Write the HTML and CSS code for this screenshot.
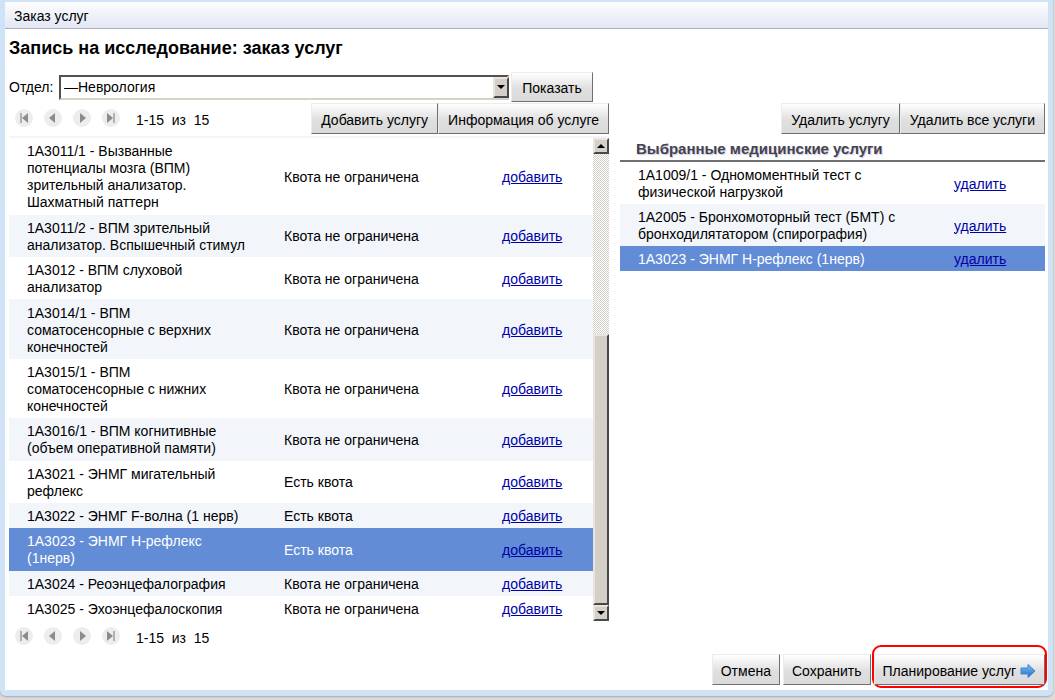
FILE: index.html
```
<!DOCTYPE html>
<html lang="ru">
<head>
<meta charset="utf-8">
<title>Заказ услуг</title>
<link rel="stylesheet" href="styles.css">
</head>
<body>
<svg class="defs" width="0" height="0" aria-hidden="true">
  <symbol id="prev" viewBox="0 0 18 18"><circle cx="9" cy="9" r="9" fill="#ededed"/><path d="M11 4v10L5 9z" fill="#8c8c8c"/></symbol>
  <symbol id="next" viewBox="0 0 18 18"><circle cx="9" cy="9" r="9" fill="#ededed"/><path d="M7 4v10l6-5z" fill="#8c8c8c"/></symbol>
  <symbol id="first" viewBox="0 0 18 18"><circle cx="9" cy="9" r="9" fill="#ededed"/><path d="M13 4v10L7 9z" fill="#8c8c8c"/><path d="M5 4h2v10H5z" fill="#b0b0b0"/></symbol>
  <symbol id="last" viewBox="0 0 18 18"><circle cx="9" cy="9" r="9" fill="#ededed"/><path d="M5 4v10l6-5z" fill="#8c8c8c"/><path d="M11 4h2v10h-2z" fill="#b0b0b0"/></symbol>
</svg>
<div class="window">
  <header class="titlebar">Заказ услуг</header>
  <main class="content">
    <h1>Запись на исследование: заказ услуг</h1>
    <form class="filter">
      <label for="dept">Отдел:</label>
      <span class="select"><select id="dept"><option>—Неврология</option></select><i class="drop"></i></span>
      <button type="button" class="btn">Показать</button>
    </form>
    <div class="columns">
      <section class="left">
        <div class="toolbar">
          <nav class="pager">
            <button type="button" aria-label="Первая"><svg><use href="#first"/></svg></button>
            <button type="button" aria-label="Назад"><svg><use href="#prev"/></svg></button>
            <button type="button" aria-label="Вперёд"><svg><use href="#next"/></svg></button>
            <button type="button" aria-label="Последняя"><svg><use href="#last"/></svg></button>
            <span>1-15&nbsp; из&nbsp; 15</span>
          </nav>
          <div class="group"><button type="button" class="btn">Добавить услугу</button><button type="button" class="btn">Информация об услуге</button></div>
        </div>
        <div class="list">
          <table class="services">
            <tr><td>1A3011/1 - Вызванные<br>потенциалы мозга (ВПМ)<br>зрительный анализатор.<br>Шахматный паттерн</td><td>Квота не ограничена</td><td><a href="#">добавить</a></td></tr>
            <tr><td>1A3011/2 - ВПМ зрительный<br>анализатор. Вспышечный стимул</td><td>Квота не ограничена</td><td><a href="#">добавить</a></td></tr>
            <tr><td>1A3012 - ВПМ слуховой<br>анализатор</td><td>Квота не ограничена</td><td><a href="#">добавить</a></td></tr>
            <tr><td>1A3014/1 - ВПМ<br>соматосенсорные с верхних<br>конечностей</td><td>Квота не ограничена</td><td><a href="#">добавить</a></td></tr>
            <tr><td>1A3015/1 - ВПМ<br>соматосенсорные с нижних<br>конечностей</td><td>Квота не ограничена</td><td><a href="#">добавить</a></td></tr>
            <tr><td>1A3016/1 - ВПМ когнитивные<br>(объем оперативной памяти)</td><td>Квота не ограничена</td><td><a href="#">добавить</a></td></tr>
            <tr><td>1A3021 - ЭНМГ мигательный<br>рефлекс</td><td>Есть квота</td><td><a href="#">добавить</a></td></tr>
            <tr><td>1A3022 - ЭНМГ F-волна (1 нерв)</td><td>Есть квота</td><td><a href="#">добавить</a></td></tr>
            <tr class="selected"><td>1A3023 - ЭНМГ Н-рефлекс<br>(1нерв)</td><td>Есть квота</td><td><a href="#">добавить</a></td></tr>
            <tr><td>1A3024 - Реоэнцефалография</td><td>Квота не ограничена</td><td><a href="#">добавить</a></td></tr>
            <tr><td>1A3025 - Эхоэнцефалоскопия</td><td>Квота не ограничена</td><td><a href="#">добавить</a></td></tr>
          </table>
          <div class="scrollbar">
            <button type="button" class="up" aria-label="Вверх"></button>
            <div class="track"></div>
            <div class="thumb"></div>
            <button type="button" class="down" aria-label="Вниз"></button>
          </div>
        </div>
        <nav class="pager bottom">
          <button type="button" aria-label="Первая"><svg><use href="#first"/></svg></button>
          <button type="button" aria-label="Назад"><svg><use href="#prev"/></svg></button>
          <button type="button" aria-label="Вперёд"><svg><use href="#next"/></svg></button>
          <button type="button" aria-label="Последняя"><svg><use href="#last"/></svg></button>
          <span>1-15&nbsp; из&nbsp; 15</span>
        </nav>
      </section>
      <section class="right">
        <div class="toolbar">
          <div class="group"><button type="button" class="btn">Удалить услугу</button><button type="button" class="btn">Удалить все услуги</button></div>
        </div>
        <table class="chosen">
          <thead><tr><th colspan="2">Выбранные медицинские услуги</th></tr></thead>
          <tbody>
            <tr><td>1A1009/1 - Одномоментный тест с<br>физической нагрузкой</td><td><a href="#">удалить</a></td></tr>
            <tr><td>1A2005 - Бронхомоторный тест (БМТ) с<br>бронходилятатором (спирография)</td><td><a href="#">удалить</a></td></tr>
            <tr class="selected"><td>1A3023 - ЭНМГ Н-рефлекс (1нерв)</td><td><a href="#">удалить</a></td></tr>
          </tbody>
        </table>
      </section>
    </div>
    <footer class="actions">
      <button type="button" class="btn">Отмена</button>
      <button type="button" class="btn">Сохранить</button>
      <div class="marked">
        <button type="button" class="btn">Планирование услуг
          <svg class="arrow" viewBox="0 0 16 16"><defs><linearGradient id="blue" x2="0" y2="1"><stop offset="0" stop-color="#7cc4f5"/><stop offset="1" stop-color="#2468c8"/></linearGradient></defs><path d="M1 5h7V1.500l7 6.500-7 6.500V11H1z" fill="url(#blue)" stroke="#3f86d6"/></svg>
        </button>
      </div>
    </footer>
  </main>
</div>
</body>
</html>
```
FILE: styles.css
```
* { box-sizing: border-box; }

body {
  margin: 0;
  min-height: 100vh;
  background: #dcdcde;
  color: #000;
  font: 14px/17px "Liberation Sans", Arial, sans-serif;
}

button, select { font: inherit; color: inherit; }
.defs { display: none; }

.window {
  display: flex;
  flex-direction: column;
  min-height: 696px;
  margin-right: 2px;
  padding: 2px 5px 6px;
  background: #d0e3f6;
  border-radius: 0 0 6px 6px;
  box-shadow: 0 1px 2px #a8a8a8;
}

.titlebar {
  height: 27px;
  padding: 6px 9px 0;
  border-bottom: 1px solid #adb0b8;
  background: linear-gradient(#fdfdfe, #e2e7f4);
}

.content {
  flex: 1;
  display: flex;
  flex-direction: column;
  padding: 9px 3px 2px 4px;
  background: #fff;
}

h1 {
  margin: 0 0 14px;
  font-size: 18px;
  line-height: 20px;
}

.filter { display: flex; align-items: center; gap: 2px; height: 30px; }
.filter label { width: 48px; }

.select { position: relative; width: 450px; height: 25px; }
.select select {
  appearance: none;
  width: 100%;
  height: 100%;
  padding: 0 20px 0 3px;
  border: 2px solid;
  border-color: #55504c #d8d2ca #d8d2ca #55504c;
  border-radius: 0;
  background: #fff;
}

.drop, .up, .down, .thumb {
  border: 2px solid;
  border-color: #e8e5e0 #484848 #484848 #e8e5e0;
  background: #d4d0c8;
}
.drop {
  position: absolute;
  top: 2px;
  right: 0;
  width: 16px;
  height: 21px;
  pointer-events: none;
}
.drop, .up, .down { display: flex; align-items: center; justify-content: center; padding: 0; }
.drop::after, .up::after, .down::after {
  content: "";
  border: 4px solid transparent;
  border-bottom-width: 0;
  border-top-color: #000;
}
.up::after { transform: rotate(180deg); }

.btn {
  height: 31px;
  padding: 3px 9px 0;
  border: 1px solid;
  border-color: #ececec #707070 #707070 #ececec;
  background: linear-gradient(#fff, #dfdfdf 55%, #dadada);
  white-space: nowrap;
}

.filter .btn { width: 82px; height: 30px; }

.columns { display: flex; gap: 11px; }
.left { width: 600px; }
.right { flex: 1; }

.toolbar { display: flex; justify-content: space-between; height: 34px; }
.right .toolbar { justify-content: flex-end; }
.group { display: flex; padding-top: 1px; }

.pager { display: flex; align-items: center; height: 32px; padding-left: 6px; gap: 11px; }
.pager button { width: 18px; height: 18px; padding: 0; border: 0; background: none; }
.pager svg { display: block; width: 18px; height: 18px; }
.pager span { padding: 4px 0 0 5px; }
.bottom { height: 24px; }
.bottom span { padding-top: 5px; }
.pager.bottom { padding-top: 6px; }

.list { display: flex; height: 485px; border-top: 2px solid #f2f6fb; }

table { border-collapse: collapse; }
.services { flex: 1; height: 483px; }
td { padding: 5px 0 3px; white-space: nowrap; }
.services td:first-child { padding-left: 18px; width: 275px; }
.services td:last-child { width: 91px; }
tr:nth-child(even) { background: #f2f6fb; }
tr.selected, tr.selected:nth-child(even) { background: #628cd6; color: #fff; }
a { color: #0000a8; }

.scrollbar { display: flex; flex-direction: column; width: 16px; }
.up, .down { height: 16px; width: 16px; }
.track {
  height: 180px;
  background: repeating-conic-gradient(#d4d0c8 0 25%, #fff 0 50%) 0 0 / 2px 2px;
}
.thumb { flex: 1; }

.chosen { width: 100%; }
th {
  height: 25px;
  padding: 3px 16px 2px;
  border-bottom: 2px solid #707074;
  color: #444448;
  font-size: 15px;
  text-align: left;
  text-shadow: 1px 1px 1px #c8c8ee;
}
.chosen td:first-child { padding-left: 18px; }
.chosen td:last-child { width: 91px; }

.actions { display: flex; align-items: flex-end; justify-content: flex-end; margin-top: auto; gap: 3px; }
.actions .btn { margin-bottom: 3px; padding: 3px 8px 0; }
.marked {
  height: 43px;
  margin: 0 -2px 0 -2px;
  border: 2px solid #f00;
  border-radius: 9px;
}
.actions .marked .btn { margin: 7px 0 0; padding-top: 4px; }
.arrow { width: 16px; height: 16px; vertical-align: -3px; }
```
